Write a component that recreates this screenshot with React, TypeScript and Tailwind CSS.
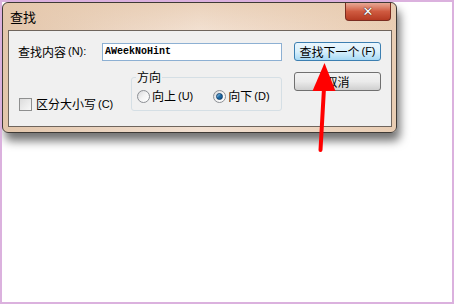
const cjk = { fontFamily: '"Noto Sans CJK SC", "Liberation Sans", sans-serif' };
const mono = { fontFamily: '"Liberation Mono", "DejaVu Sans Mono", monospace' };
const paren = { fontFamily: '"Liberation Sans", "DejaVu Sans", sans-serif' };

function Radio({ checked }: { checked?: boolean }) {
  return (
    <div className="shrink-0 w-[13px] h-[13px] rounded-full border border-[#8c8f94] bg-gradient-to-br from-[#d8d9db] via-[#f4f4f4] to-white flex items-center justify-center">
      {checked && (
        <div className="w-[7px] h-[7px] rounded-full bg-gradient-to-br from-[#9fd6f5] via-[#1f6ea8] to-[#0c4c85] border border-[#0d3f6e]" />
      )}
    </div>
  );
}

function Key({ k }: { k: string }) {
  return <span className="text-[11px] ml-[2px]" style={paren}>{k}</span>;
}

export default function App() {
  return (
    <div className="w-[454px] h-[304px] border-2 border-[#dbb1de] bg-white relative overflow-hidden" style={cjk}>
      {/* Dialog window */}
      <div className="w-[395px] h-[131px] rounded-[6px] border border-[#3e3a36] bg-gradient-to-r from-[#e3c6ab] via-[#f2e0d1] to-[#e9cdb3] shadow-[3px_8px_10px_rgba(0,0,0,0.55)] relative">
        {/* Title bar */}
        <div className="h-[27px] flex items-center pl-[7px] text-[13px] text-black bg-gradient-to-b from-[#e6c9ad]/60 to-transparent rounded-t-[6px]">
          查找
        </div>
        <button className="absolute top-0 right-[5px] w-[46px] h-[18px] rounded-b-[4px] border border-t-0 border-[#7a2c20] bg-gradient-to-b from-[#e7a996] via-[#cf5a40] to-[#b53a22] flex items-center justify-center">
          <span className="text-white font-bold text-[13px] leading-none" style={{ fontFamily: '"DejaVu Sans", sans-serif', textShadow: '0 0 1px #3b1a12, 0 0 1px #3b1a12' }}>✕</span>
        </button>

        {/* Client area */}
        <div className="ml-[5px] w-[384px] h-[97px] border border-[#6f655d] bg-[#f0f0f0] flex pl-[9px] pt-[11px] text-[12px] text-black whitespace-nowrap">
          <div className="w-[264px] flex flex-col">
            <div className="h-[19px] flex items-center">
              <div className="w-[84px] flex items-center">
                查找内容<Key k="(N):" />
              </div>
              <div className="w-[180px] h-[18px] border border-[#8db0d3] bg-white flex items-center pl-[2px] text-[10px] text-black font-bold" style={mono}>
                AWeekNoHint
              </div>
            </div>
            <div className="flex mt-[9px]">
              <div className="w-[113px] flex items-center pt-[25px] pl-[1px]">
                <div className="shrink-0 w-[13px] h-[13px] border border-[#8e8f8f] bg-gradient-to-br from-[#dcdcdc] to-[#f8f8f8] mr-[4px]" />
                区分大小写<Key k="(C)" />
              </div>
              <fieldset className="w-[151px] h-[41px] border border-[#d5dfe5] rounded-[3px] pl-[5px] pr-0 pb-0 pt-0">
                <legend className="px-[1px] leading-[14px] ml-[-1px]">方向</legend>
                <div className="flex items-center h-[18px] mt-[3px]">
                  <Radio />
                  <span className="ml-[2px]">向上</span>
                  <Key k="(U)" />
                  <div className="ml-[20px]"><Radio checked /></div>
                  <span className="ml-[2px]">向下</span>
                  <Key k="(D)" />
                </div>
              </fieldset>
            </div>
          </div>
          <div className="ml-[12px] flex flex-col gap-[11px]">
            <button className="w-[87px] h-[19px] rounded-[3px] border border-[#3c7fb1] bg-gradient-to-b from-[#eaf6fd] via-[#d9f0fc] to-[#a7d9f5] flex items-center justify-center text-[12px] text-black">
              查找下一个<Key k="(F)" />
            </button>
            <button className="w-[87px] h-[19px] rounded-[3px] border border-[#707070] bg-gradient-to-b from-[#f2f2f2] via-[#ebebeb] to-[#cfcfcf] flex items-center justify-center text-[12px] text-black">
              取消
            </button>
          </div>
        </div>
      </div>

      {/* Red arrow annotation */}
      <svg className="absolute left-0 top-0" width="454" height="304" viewBox="0 0 454 304">
        <line x1="322" y1="86" x2="318.5" y2="148" stroke="#ff0000" strokeWidth="4" strokeLinecap="round" />
        <polygon points="322.5,61 310.5,89 333.5,89" fill="#ff0000" />
      </svg>
    </div>
  );
}
